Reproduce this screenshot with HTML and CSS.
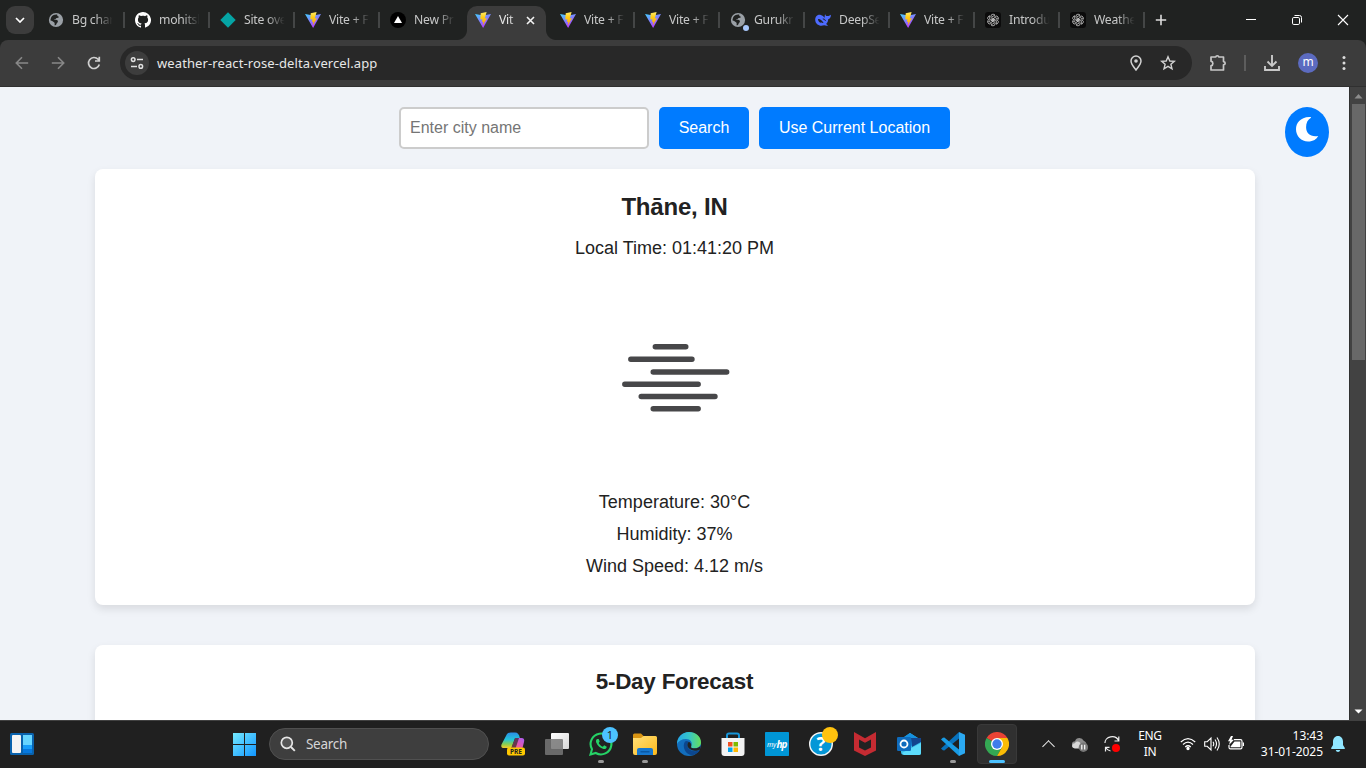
FILE: index.html
```html
<!DOCTYPE html>
<html lang="en">
<head>
<meta charset="utf-8">
<title>Weather</title>
<link rel="stylesheet" href="styles.css">
</head>
<body>
<svg class="defs" width="0" height="0" aria-hidden="true">
  <defs>
    <linearGradient id="gv" x1="0" y1="0" x2=".6" y2="1"><stop offset="0" stop-color="#41d1ff"/><stop offset="1" stop-color="#bd34fe"/></linearGradient>
    <linearGradient id="gb" x1="0" y1="0" x2="0" y2="1"><stop offset="0" stop-color="#ffea63"/><stop offset=".4" stop-color="#ffcc16"/><stop offset="1" stop-color="#ffa800"/></linearGradient>
    <linearGradient id="gw" gradientUnits="userSpaceOnUse" x1="0" y1="0" x2="23" y2="23"><stop offset="0" stop-color="#74eaff"/><stop offset="1" stop-color="#1195ff"/></linearGradient>
    <linearGradient id="gc1" x1="0" y1="0" x2="0" y2="1"><stop offset="0" stop-color="#2a8de8"/><stop offset=".45" stop-color="#24c3d8"/><stop offset=".75" stop-color="#88ce50"/><stop offset="1" stop-color="#f5c92c"/></linearGradient>
    <linearGradient id="gc2" x1="1" y1="0" x2="0" y2="1"><stop offset="0" stop-color="#a45cf5"/><stop offset=".5" stop-color="#e558ae"/><stop offset="1" stop-color="#ff7655"/></linearGradient>
    <linearGradient id="ge" x1="0" y1="0" x2="1" y2="0"><stop offset="0" stop-color="#26a8e8"/><stop offset=".5" stop-color="#35c5c9"/><stop offset="1" stop-color="#66df58"/></linearGradient>
    <linearGradient id="gf" x1="0" y1="0" x2="1" y2="1"><stop offset="0" stop-color="#ffe07a"/><stop offset="1" stop-color="#fdb91a"/></linearGradient>
    <linearGradient id="gt" x1="0" y1="0" x2="1" y2="1"><stop offset="0" stop-color="#fff"/><stop offset="1" stop-color="#d8d8d8"/></linearGradient>
    <symbol id="vite" viewBox="0 0 16 16"><path d="M0 2 8.1 16 16 2 8.3 3.4Z" fill="url(#gv)"/><path d="M11.6.1 5.7 1.2 5.3 7.6 7.4 7.2 6.9 10 8.4 9.6 7.8 13.2 12 6.2 9.8 6.6 11.6.1Z" fill="url(#gb)"/></symbol>
    <symbol id="globe" viewBox="0 0 16 16"><circle cx="8" cy="8" r="7.1" fill="#9aa0a6"/><path d="M3 5.8C4 3.4 6.2 2.4 9.2 2.6 9 3.9 9.8 4.6 11 4.8 10.7 6 9.2 5.9 8.4 6 8 7.2 6.8 7 5.8 7.2 7 7.8 9 7.4 9.8 8.7 10.2 10 9.3 10.8 8.6 11.4 8.4 12.6 7.6 13.5 6.5 13.2 6.9 11.9 6.8 10.6 5.6 10 4.6 9.3 3.9 8.7 2.4 8.2Z" fill="#202221"/></symbol>
    <symbol id="github" viewBox="0 0 16 16"><path fill="#fff" d="M8 0C3.58 0 0 3.58 0 8c0 3.54 2.29 6.53 5.47 7.59.4.07.55-.17.55-.38v-1.49C3.8 14.2 3.35 12.65 3.35 12.65c-.36-.92-.89-1.17-.89-1.17-.73-.49.05-.48.05-.48.8.06 1.22.82 1.22.82.72 1.22 1.87.87 2.33.66.07-.51.28-.87.51-1.07-1.78-.2-3.64-.89-3.64-3.95 0-.87.31-1.59.82-2.15-.08-.2-.36-1.02.08-2.12 0 0 .67-.21 2.2.82A7.7 7.7 0 0 1 8 3.86c.68 0 1.36.09 2 .27 1.53-1.04 2.2-.82 2.2-.82.44 1.1.16 1.92.08 2.12.51.56.82 1.27.82 2.15 0 3.07-1.87 3.75-3.65 3.95.29.25.54.73.54 1.48v2.2c0 .21.15.46.55.38A8 8 0 0 0 8 0Z"/></symbol>
    <symbol id="diamond" viewBox="0 0 16 16"><path d="M8 .3 15.7 8 8 15.7.3 8Z" fill="#05a4a4"/></symbol>
    <symbol id="vercel" viewBox="0 0 16 16"><circle cx="8" cy="8" r="8" fill="#000"/><path d="M8 4 12 11H4Z" fill="#fff"/></symbol>
    <symbol id="deepseek" viewBox="0 0 16 16"><path fill="#4d6bfe" d="M.2 8C.1 4 3.2 2.3 5.8 3 7.4 3.4 8.6 4.6 9.7 5.8 9.8 4.6 9.4 3.4 10.2 2.2 10.6 3.6 11.3 4.2 12.6 4.1 13.8 4 14.5 3.5 15.9 2.8 15.9 5.4 15 6.9 13.2 7.3 13.1 9.6 12.4 11 11.1 12L13 13.6C11.7 14.1 10.2 13.7 9.1 13.3 4.8 14.9.4 12.4.2 8Z"/><path d="M3 7C5 6.6 7.4 8.8 8.6 11 7 11 6.2 10 5.2 10.8 4 10 3 8.6 3 7Z" fill="#202221"/><path d="M7.8 6.9Q9.9 6.7 10.5 8.9" fill="none" stroke="#202221"/></symbol>
    <symbol id="openai" viewBox="0 0 16 16"><rect width="16" height="16" rx="3" fill="#0b0b0b"/><g fill="none" stroke="#dcdcdc" stroke-width=".7"><path id="petal" d="M6 5.3V4.2Q6 2.2 8 2.2 9.3 2.2 10 3.1L6.9 4.9V8.5L8 9.1"/><use href="#petal" transform="rotate(60 8 8)"/><use href="#petal" transform="rotate(120 8 8)"/><use href="#petal" transform="rotate(180 8 8)"/><use href="#petal" transform="rotate(240 8 8)"/><use href="#petal" transform="rotate(300 8 8)"/></g></symbol>
  </defs>
</svg>

<div class="screen">
  <header class="tabstrip">
    <div class="tab-search"><svg width="10" height="6" viewBox="0 0 10 6"><path d="M1 1 5 5 9 1" fill="none" stroke="#fff" stroke-width="1.7"/></svg></div>
    <div class="tabs">
      <div class="tab sep first"><svg><use href="#globe"/></svg><span>Bg char</span></div>
      <div class="tab sep"><svg><use href="#github"/></svg><span>mohitsl</span></div>
      <div class="tab sep"><svg><use href="#diamond"/></svg><span>Site ove</span></div>
      <div class="tab sep"><svg><use href="#vite"/></svg><span>Vite + F</span></div>
      <div class="tab"><svg><use href="#vercel"/></svg><span>New Pr</span></div>
      <div class="tab active"><svg><use href="#vite"/></svg><span>Vit</span><svg class="x" viewBox="0 0 9 9"><path d="M1 1 8 8M8 1 1 8" stroke="#f2f2f2" stroke-width="1.6"/></svg></div>
      <div class="tab sep"><svg><use href="#vite"/></svg><span>Vite + F</span></div>
      <div class="tab sep"><svg><use href="#vite"/></svg><span>Vite + F</span></div>
      <div class="tab sep dot"><svg><use href="#globe"/></svg><span>Gurukr</span></div>
      <div class="tab sep"><svg><use href="#deepseek"/></svg><span>DeepSe</span></div>
      <div class="tab sep"><svg><use href="#vite"/></svg><span>Vite + F</span></div>
      <div class="tab sep"><svg><use href="#openai"/></svg><span>Introdu</span></div>
      <div class="tab sep"><svg><use href="#openai"/></svg><span>Weathe</span></div>
    </div>
    <svg class="plus" width="12" height="12" viewBox="0 0 12 12"><path d="M6 .8V11.2M.8 6H11.2" stroke="#ddd" stroke-width="1.6"/></svg>
    <div class="window-controls">
      <svg viewBox="0 0 12 12"><path d="M1 5.5H11" stroke="#fff"/></svg>
      <svg viewBox="0 0 12 12" fill="none" stroke="#fff"><rect x="1.5" y="3.5" width="7" height="7" rx="1.3"/><path d="M3.5 1.5H8.5Q10.5 1.5 10.5 3.5V8.5"/></svg>
      <svg viewBox="0 0 12 12"><path d="M1 1 11 11M11 1 1 11" stroke="#fff" stroke-width="1.1"/></svg>
    </div>
  </header>

  <nav class="toolbar">
    <div class="nav-icons">
      <svg viewBox="0 0 16 16" fill="none" stroke="#888" stroke-width="1.6"><path d="M14.2 8H2.5M8 2.3 2.3 8 8 13.7"/></svg>
      <svg viewBox="0 0 16 16" fill="none" stroke="#888" stroke-width="1.6"><path d="M1.8 8H13.5M8 2.3 13.7 8 8 13.7"/></svg>
      <svg viewBox="0 0 16 16" fill="none" stroke="#d0d0d0" stroke-width="1.7"><path d="M13.3 9.5A5.5 5.5 0 1 1 12.1 4.3L13.2 5.5M13.3 1.8V6H9"/></svg>
    </div>
    <div class="address">
      <div class="site-info"><svg width="14" height="14" viewBox="0 0 14 14" fill="none" stroke="#e0e0e0" stroke-width="1.5"><circle cx="3.2" cy="3.6" r="1.8"/><path d="M7 3.6H13M1 10.4H7"/><circle cx="10.8" cy="10.4" r="1.8"/></svg></div>
      <span class="url">weather-react-rose-delta.vercel.app</span>
      <div class="address-actions">
        <svg viewBox="0 0 16 16"><path d="M8 15C5.6 11.8 3 9 3 6A5 5 0 0 1 13 6C13 9 10.4 11.8 8 15Z" fill="none" stroke="#d2d2d2" stroke-width="1.5"/><circle cx="8" cy="6" r="1.8" fill="#d2d2d2"/></svg>
        <svg viewBox="0 0 16 16"><path d="M8 1.8 9.8 6 14.4 6.3 10.9 9.3 12 13.8 8 11.4 4 13.8 5.1 9.3 1.6 6.3 6.2 6Z" fill="none" stroke="#d2d2d2" stroke-width="1.4"/></svg>
      </div>
    </div>
    <div class="toolbar-actions">
      <svg width="18" height="18" viewBox="0 0 18 18"><path d="M2 3H6.8C7 1.3 9.6 1.3 9.8 3H14.5V7.6C16.7 7.8 16.7 10.6 14.5 10.8V16H2V11.8C4.5 11.2 4.5 7.8 2 7.2Z" fill="none" stroke="#c8c8c8" stroke-width="1.7" stroke-linejoin="round"/></svg>
      <i></i>
      <svg width="18" height="18" viewBox="0 0 18 18" fill="none" stroke="#c8c8c8" stroke-width="1.9"><path d="M9 1V11.7M4.5 7.5 9 12 13.5 7.5M2 12V16H16V12"/></svg>
      <b>m</b>
      <svg width="4" height="16" viewBox="0 0 4 16" fill="#ddd"><circle cx="2" cy="2.5" r="1.5"/><circle cx="2" cy="8" r="1.5"/><circle cx="2" cy="13.5" r="1.5"/></svg>
    </div>
  </nav>

  <div class="viewport">
    <main class="page">
      <div class="search-row">
        <input class="city" type="text" placeholder="Enter city name">
        <button class="btn search-btn">Search</button>
        <button class="btn location-btn">Use Current Location</button>
      </div>
      <button class="theme"><svg width="24" height="25" viewBox="0 0 24 25"><path d="M14.8 0C4.5-.3 0 6 0 12.2 0 19 5.4 24.5 12 24.5 17.5 24.5 20.6 22 22.2 19 14.5 20.5 10.2 16 10.1 10.5 10 6 11.5 2.8 15 .7Z" fill="#fff"/></svg></button>
      <section class="card weather">
        <h2>Thāne, IN</h2>
        <p>Local Time: 01:41:20 PM</p>
        <svg class="mist" width="200" height="200" viewBox="0 0 200 200" stroke="#474749" stroke-width="5.4" stroke-linecap="round"><path d="M80.3 69.8H110.8M55.8 82.3H117M78.2 95H151.7M49.8 107.2H123.2M66.2 119.5H140M78.2 131.7H123.2"/></svg>
        <p>Temperature: 30°C</p>
        <p>Humidity: 37%</p>
        <p>Wind Speed: 4.12 m/s</p>
      </section>
      <section class="card"><h2 class="forecast">5-Day Forecast</h2></section>
    </main>
    <div class="scrollbar">
      <svg width="9" height="5" viewBox="0 0 9 5"><path d="M4.5 0 8.5 4.5H.5Z" fill="#8c8c8c"/></svg>
      <div class="thumb"></div>
      <svg width="9" height="5" viewBox="0 0 9 5"><path d="M.5.5H8.5L4.5 4.5Z" fill="#fff"/></svg>
    </div>
  </div>

  <footer class="taskbar">
    <svg class="widgets" width="24" height="22" viewBox="0 0 24 22"><rect width="24" height="22" rx="1.5" fill="#0962ad"/><rect x="2" y="2" width="9" height="18" rx="1" fill="#f4f4f4"/><path d="M13 2H22V12H13Z" fill="#66d5ff"/><path d="M13 12H22V16H13Z" fill="#179efa"/><path d="M13 16H22V20H13Z" fill="#0678de"/></svg>
    <svg class="start" width="23" height="23" viewBox="0 0 23 23" fill="url(#gw)"><path d="M0 0H11V11H0ZM12 0H23V11H12ZM0 12H11V23H0ZM12 12H23V23H12Z"/></svg>
    <div class="task-search"><svg width="16" height="16" viewBox="0 0 16 16"><circle cx="6.8" cy="6.8" r="5.5" fill="#555" stroke="#e6e6e6" stroke-width="1.7"/><path d="M11 11 14.8 14.8" stroke="#e6e6e6" stroke-width="1.9"/></svg><span>Search</span></div>
    <div class="apps">
      <div><svg viewBox="0 0 24 24"><path d="M6 2Q7 .5 10 .5H14Q18 .5 18.8 6L14 6 10.3 16H3Q-.5 16 .5 12.5Z" fill="url(#gc1)"/><path d="M14.5 6H20.5Q24 6 23 10L21 18H10Z" fill="url(#gc2)"/><path d="M14.5 6H18L14 18H10Z" fill="#222" opacity=".65"/><rect x="6" y="15.5" width="18" height="8" rx="2" fill="#ffc800"/><text x="15" y="22" text-anchor="middle" class="pre">PRE</text></svg></div>
      <div><svg viewBox="0 0 24 24"><rect x="6" y="1" width="18" height="16" rx="1" fill="url(#gt)"/><rect x="0" y="7" width="18" height="16" rx="1" fill="#777" opacity=".85"/></svg></div>
      <div class="run"><svg viewBox="0 0 24 24"><path d="M1.5 22.5 3 17.2A10.4 10.4 0 1 1 6.8 21Z" fill="#222" stroke="#25d366" stroke-width="2.1"/><path d="M8.2 7C7 7.6 6.6 9.2 7.3 10.7 8.8 13.9 11.2 16 14.5 17 16.2 17.4 17.7 16.3 17.7 14.7L15.2 13.3 13.8 14.8C12 14.1 10.6 12.8 9.7 11L10.7 9.6 9.7 7Z" fill="#25d366"/></svg><em class="badge">1</em></div>
      <div class="run"><svg viewBox="0 0 24 24"><path d="M0 3Q0 1.5 1.5 1.5H8L10.5 4V8H0Z" fill="#d99412"/><path d="M0 6H8L10.5 4H22.5Q24 4 24 5.5V21Q24 23 22 23H2Q0 23 0 21Z" fill="url(#gf)"/><path d="M4 23V18Q4 16 6 16H18Q20 16 20 18V23Z" fill="#1677ce"/><path d="M7.5 19H16.5V20.5H7.5Z" fill="#0958a4"/></svg></div>
      <div><svg viewBox="0 0 24 24"><circle cx="12" cy="12" r="12" fill="#126ebd"/><path d="M0 12C0 5 5.4 0 12 0 18.7 0 24 4.6 24 10.5 24 14.5 20.7 16.4 17 16.4 14 16.4 13.5 15.2 14.3 14 16 10.4 13.4 7 9 7 4.6 7 1.4 9 0 12Z" fill="url(#ge)"/><path d="M8 9.5C4.4 15 9 24 16.5 23.1 19.5 22 21.8 20.2 23 17.8 19.5 20 14 19.5 11.3 16.2 9.7 14.1 9.9 11.5 11.6 9.8 10.5 8.7 9 8.7 8 9.5Z" fill="#0c478f"/><path d="M11.8 9.7C9.8 11.5 9.9 14.5 11.8 16.3 14.8 19.3 19.5 19.4 23 17.4L23.6 14C21.5 16.4 17 17 14.4 15.7 13.5 14.8 15.8 11.8 11.8 9.7Z" fill="#222"/></svg></div>
      <div><svg viewBox="0 0 24 24"><path d="M6 8V3.5Q6 1.5 8 1.5H16Q18 1.5 18 3.5V8" fill="none" stroke="#1795d8" stroke-width="2"/><path d="M.5 6H23.5V21Q23.5 24 20.5 24H3.5Q.5 24 .5 21Z" fill="#f3f3f3"/><path d="M7 10H11.5V14.5H7Z" fill="#f25022"/><path d="M12.5 10H17V14.5H12.5Z" fill="#7fba00"/><path d="M7 15.5H11.5V20H7Z" fill="#00a4ef"/><path d="M12.5 15.5H17V20H12.5Z" fill="#ffb900"/></svg></div>
      <div><svg viewBox="0 0 24 24"><rect width="24" height="24" rx=".7" fill="#0096d6"/><text x="2" y="15" class="my">my</text><text x="11.5" y="15.7" class="hp">hp</text></svg></div>
      <div><svg viewBox="0 0 24 24"><circle cx="12" cy="12" r="11.3" fill="#0497d7" stroke="#f5f5f5" stroke-width="1.4"/><text x="12" y="19" text-anchor="middle" class="question">?</text></svg><em class="badge gold"></em></div>
      <div><svg viewBox="0 0 24 24"><path d="M1 0 12 6.2 23 0V18.5L12 24 1 18.5Z" fill="#c52b32"/><path d="M6 7.4 12 10.8 18 7.4V15.5L12 18.6 6 15.5Z" fill="#222"/></svg></div>
      <div><svg viewBox="0 0 24 24"><path d="M3 8 13 1 24 8V21Q24 23 22 23H7Q4 23 4 20Z" fill="#38bce9"/><path d="M7 5 13 1 24 8 15 14 7 10Z" fill="#1490df"/><path d="M14 6H24V10L15 15Z" fill="#13458e"/><path d="M5 21 24 11V21Q24 23 22 23H7Z" fill="#5cdcfb"/><rect y="5" width="14" height="14" rx="1.3" fill="#0f6cbd"/><circle cx="7" cy="12" r="3.5" fill="none" stroke="#fff" stroke-width="1.8"/></svg></div>
      <div class="run"><svg viewBox="0 0 24 24"><path d="M18 0 24 2.7V21.3L18 24Z" fill="#2ba9f2"/><path d="M18 0V6.5L3.3 18.4 1.8 18.2 0 16.4Z" fill="#0872bd"/><path d="M18 24V17.5L3.3 5.6 1.8 5.8 0 7.6Z" fill="#189be4"/></svg></div>
      <div class="current"><svg viewBox="0 0 24 24"><path d="M12 12 1.6 6A12 12 0 0 1 22.4 6Z" fill="#ea4335"/><path d="M12 12 1.6 6A12 12 0 0 0 12 24L17.2 15Z" fill="#34a853"/><path d="M12 6H22.4A12 12 0 0 1 12 24L17.2 15Z" fill="#fbbc05"/><circle cx="12" cy="12" r="6" fill="#fff"/><circle cx="12" cy="12" r="4.7" fill="#3f7de9"/></svg></div>
    </div>
    <div class="tray">
      <svg viewBox="0 0 16 16"><path d="M2 12A3.5 3.5 0 0 1 3 5.2 4.7 4.7 0 0 1 11.7 4.8 4 4 0 0 1 13 11.8Z" fill="#8d8d8d"/><path d="M2.8 12.4C-.6 12.2-.7 7.5 2.8 7.3 4.6 4 8.5 5.7 8.6 8L7.7 12.4Z" fill="#d8d8d8"/><circle cx="11.4" cy="11.2" r="4.7" fill="#777"/><path d="M9.8 8.8V13.5M12.7 8.8V13.5" stroke="#fff" stroke-width="1.2"/></svg>
      <svg viewBox="0 0 16 16" fill="none" stroke="#eee" stroke-width="1.2"><path d="M1 7A7 6 0 0 1 14.5 4.5M14.8.5V5H10.5M1.5 15.5V11.3H5.5M2 12Q3.5 14.3 6.5 15"/><circle cx="12" cy="12" r="4" fill="red" stroke="none"/></svg>
    </div>
    <div class="language"><span>ENG</span><span>IN</span></div>
    <div class="status">
      <svg viewBox="0 0 16 16" fill="none" stroke="#fff" stroke-width="1.2"><path d="M.8 6Q8-.8 15.2 6M3 8.5Q8 3.8 13 8.5M5.2 11Q8 8.5 10.8 11"/><circle cx="8" cy="12.5" r="1.1" fill="#fff"/></svg>
      <svg viewBox="0 0 16 16" fill="none" stroke="#fff" stroke-width="1.1"><path d="M.7 5.7H3.2L7 2V14L3.2 10.3H.7ZM9 5.7Q10.5 8 9 10.3M11 3.5Q14 8 11 12.5M13 1.5Q17.5 8 13 14.5"/></svg>
      <svg viewBox="0 0 16 16" fill="none" stroke="#fff" stroke-width="1.2"><path d="M6 3.7H12.5Q14 3.7 14 5.2V11.2Q14 12.8 12.5 12.8H2.5Q1 12.8 1 11.2V9"/><path d="M15.4 6.5V10" stroke-width="1.3"/><path d="M6.5 5.5H12.4V11.2H2.6V10.5Z" fill="#fff" stroke="none"/><path d="M3 0 0 5.2H2L1 9 6 3.8H3.5L5 0Z" fill="#fff" stroke="none"/></svg>
    </div>
    <div class="clock"><span>13:43</span><span>31-01-2025</span></div>
    <svg class="bell" width="14" height="16" viewBox="0 0 14 16" fill="#91e6ff"><path d="M7 0C3.8 0 2 2.5 2 5.5V9L0 12.3Q0 13 1 13H13Q14 13 14 12.3L12 9V5.5C12 2.5 10.2 0 7 0ZM4.7 14H9.3Q8.8 16 7 16T4.7 14Z"/></svg>
  </footer>
</div>
</body>
</html>
```

FILE: styles.css
```css
* { box-sizing: border-box; }
body { margin: 0; overflow: hidden; font-family: "Liberation Sans", Arial, sans-serif; }
svg { display: block; flex: none; }
.defs { position: absolute; }
.screen { width: 1366px; height: 768px; display: flex; flex-direction: column; background: #202221; }

.tabstrip { height: 40px; flex: none; display: flex; align-items: flex-start; background: #202221; padding-left: 6px; font-family: "Noto Sans", sans-serif; }
.tab-search { width: 28px; height: 28px; margin-top: 6px; border-radius: 9px; background: #3c3c3c; display: flex; align-items: center; justify-content: center; }
.tabs { display: flex; margin-left: 5px; }
.tab { width: 85px; height: 40px; padding-left: 11px; display: flex; align-items: center; position: relative; color: #c7c8c8; }
.tab.first { padding-left: 9px; }
.tab svg { width: 16px; height: 16px; }
.tab span { width: 42px; margin-left: 8px; white-space: nowrap; font-size: 12.2px; letter-spacing: -.25px; line-height: 20px; -webkit-mask-image: linear-gradient(90deg, #000 55%, transparent 97%); mask-image: linear-gradient(90deg, #000 55%, transparent 97%); }
.tab.sep::after { content: ""; position: absolute; right: -1px; top: 12px; width: 2px; height: 16px; background: #444646; }
.tab.active { z-index: 1; color: #e8e8e8; }
.tab.active::before { content: ""; position: absolute; left: 3px; top: 6px; width: 79px; height: 34px; background: #3c3c3c; border-radius: 10px 10px 0 0; }
.tab.active::after { content: ""; position: absolute; left: -7px; right: -7px; bottom: 0; height: 10px; background: radial-gradient(circle at 0 0, transparent 9.5px, #3c3c3c 10.5px) left / 10px 10px no-repeat, radial-gradient(circle at 100% 0, transparent 9.5px, #3c3c3c 10.5px) right / 10px 10px no-repeat; }
.tab.active > * { position: relative; z-index: 1; }
.tab.active span { width: 17px; -webkit-mask-image: linear-gradient(90deg, #000 60%, transparent 120%); mask-image: linear-gradient(90deg, #000 60%, transparent 120%); }
.tab.active .x { width: 9px; height: 9px; margin-left: 10px; }
.tab.dot::before { content: ""; position: absolute; left: 24px; top: 25px; width: 6px; height: 6px; border-radius: 50%; background: #a8c7fa; z-index: 1; }
.plus { margin: 14px 0 0 11px; }
.window-controls { display: flex; gap: 34px; margin: 14px 17px 0 auto; }
.window-controls svg { width: 12px; height: 12px; }

.toolbar { height: 47px; flex: none; display: flex; align-items: flex-start; padding-top: 6px; background: #3c3c3c; border-bottom: 1px solid #303030; border-radius: 8px 8px 0 0; }
.nav-icons { display: flex; gap: 20px; padding: 9px 0 0 14px; width: 120px; }
.nav-icons svg { width: 16px; height: 16px; }
.address { width: 1072px; height: 34px; border-radius: 17px; background: #282828; display: flex; align-items: center; padding: 0 16px 0 5px; }
.site-info { width: 24px; height: 24px; border-radius: 50%; background: #3d3d3d; display: flex; align-items: center; justify-content: center; }
.url { margin-left: 8px; color: #e7e7e7; font: 13px "Noto Sans", sans-serif; letter-spacing: .1px; }
.address-actions { display: flex; gap: 16px; margin-left: auto; }
.address-actions svg { width: 16px; height: 16px; }
.toolbar-actions { display: flex; align-items: center; height: 34px; margin-left: 17px; }
.toolbar-actions i { width: 2px; height: 16px; margin: 0 18px 0 17px; background: #5d5d5d; }
.toolbar-actions b { width: 20px; height: 20px; margin: 0 24px 0 17px; border-radius: 50%; background: #5c6bc0; color: #fff; font: 12px/18px "Noto Sans", sans-serif; text-align: center; }
.toolbar-actions i + svg { margin-left: -1px; }

.viewport { height: 633px; flex: none; display: flex; overflow: hidden; }
.page { width: 1349px; padding: 20px 94px; background: #f0f3f8; position: relative; color: #222; text-align: center; }
.search-row { display: flex; justify-content: center; gap: 10px; margin-bottom: 20px; }
.city { width: 250px; height: 42px; border: 2px solid #ccc; border-radius: 5px; padding: 0 9px; font: 16px "Liberation Sans", Arial, sans-serif; background: #fff; }
.city::placeholder { color: #757575; }
.btn { height: 42px; padding: 0; border: 0; border-radius: 5px; background: #007bff; color: #fff; font: 16px "Liberation Sans", Arial, sans-serif; }
.search-btn { width: 90px; }
.location-btn { width: 191px; }
.theme { position: absolute; top: 20px; right: 20px; width: 44px; height: 50px; padding: 0 0 5px 11px; border: 0; border-radius: 50%; background: #007bff; }
.card { width: 1160px; margin: 0 auto 40px; padding: 20px; border-radius: 8px; background: #fff; box-shadow: 0 4px 8px rgba(0, 0, 0, .1); }
.weather { height: 436px; }
.card h2 { margin: 4px 0 17px; font-size: 24px; line-height: 28px; letter-spacing: -.2px; }
.card h2.forecast { margin-top: 3px; font-size: 22.4px; }
.card p { margin: 0 0 12px; font-size: 18px; line-height: 20px; }
.card .mist { width: 200px; height: 200px; margin: 19px auto 15px; }

.scrollbar { width: 17px; background: #424242; border-left: 1px solid #303030; display: flex; flex-direction: column; align-items: center; padding: 7px 0 6px; }
.thumb { width: 13px; height: 256px; margin: 5px 0 auto; background: #686868; }

.taskbar { height: 48px; flex: none; display: flex; align-items: center; padding-bottom: 1px; background: #202020; border-top: 1px solid #414141; color: #fff; font-family: "Noto Sans", sans-serif; }
.widgets { margin-left: 10px; }
.start { margin-left: 199px; }
.task-search { width: 220px; height: 32px; margin: 0 2px 0 13px; padding-left: 10px; border: 1px solid #505050; border-radius: 16px; background: #3e3e3e; display: flex; align-items: center; gap: 10px; color: #d6d6d6; font-size: 13.5px; letter-spacing: -.3px; }
.apps { display: flex; }
.apps > div { width: 44px; height: 40px; display: flex; align-items: center; justify-content: center; position: relative; }
.apps svg { width: 24px; height: 24px; }
.apps .run::after, .apps .current::after { content: ""; position: absolute; bottom: 1px; left: 19px; width: 6px; height: 3px; border-radius: 2px; background: #999; }
.apps .current::before { content: ""; position: absolute; inset: 0 2px; background: #303030; border: 1px solid #393939; border-radius: 4px; }
.apps .current svg { position: relative; }
.apps .current::after { left: 14px; width: 16px; background: #4cc2ff; }
.badge { position: absolute; right: 5px; top: 3px; width: 16px; height: 16px; border-radius: 50%; background: #4cc2ff; color: #222; font: 11px/16px "Noto Sans", sans-serif; text-align: center; }
.badge.gold { background: #ffc20e; }
.pre { font: bold 6.5px "Noto Sans", sans-serif; fill: #222; }
.my { font: italic 7px "Noto Sans", sans-serif; fill: #fff; }
.hp { font: italic bold 10px "Noto Sans", sans-serif; fill: #fff; letter-spacing: -1px; }
.question { font: bold 19px "Noto Sans", sans-serif; fill: #fff; }
.tray { display: flex; align-items: center; gap: 16px; margin-left: 53px; position: relative; }
.tray::before { content: ""; position: absolute; left: -28px; top: 6px; width: 8px; height: 8px; border: solid #eee; border-width: 1.5px 0 0 1.5px; transform: rotate(45deg); }
.tray svg, .status svg { width: 16px; height: 16px; }
.language { width: 28px; margin-left: 16px; display: flex; flex-direction: column; align-items: center; font-size: 12px; line-height: 16px; letter-spacing: -.3px; }
.status { display: flex; gap: 8px; margin-left: 16px; }
.clock { width: 70px; margin-left: 9px; display: flex; flex-direction: column; align-items: flex-end; font-size: 12px; line-height: 16px; letter-spacing: -.05px; white-space: nowrap; }
.bell { margin-left: 8px; }
```
